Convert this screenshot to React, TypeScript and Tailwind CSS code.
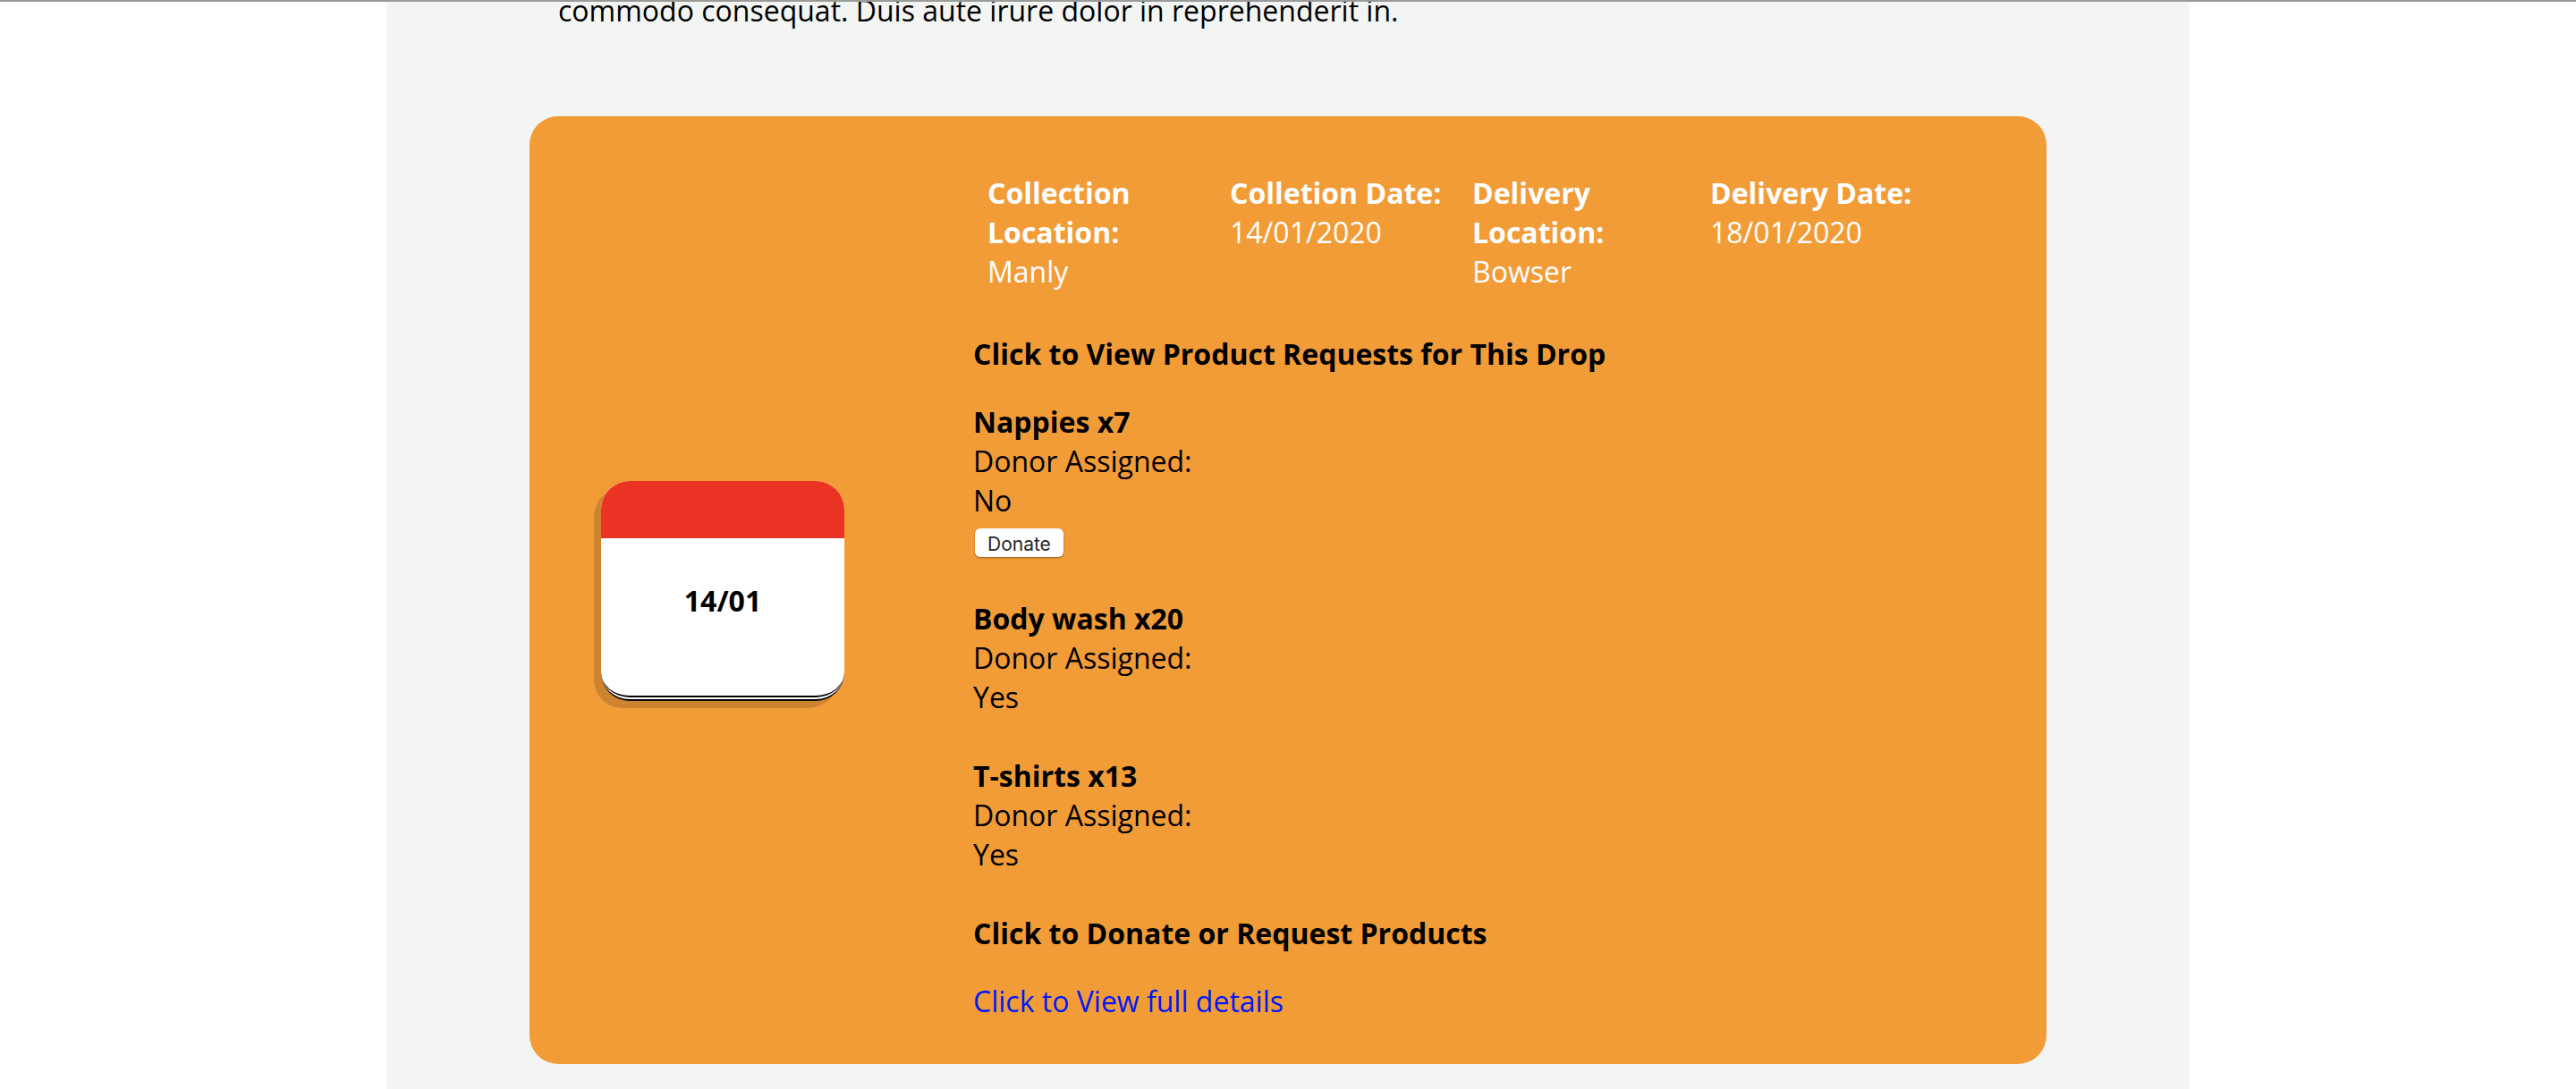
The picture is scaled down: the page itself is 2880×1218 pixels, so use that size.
import { useState } from "react";

type Request = { name: string; quantity: number; donorAssigned: boolean };

const details = [
  { label: "Collection Location:", value: "Manly" },
  { label: "Colletion Date:", value: "14/01/2020" },
  { label: "Delivery Location:", value: "Bowser" },
  { label: "Delivery Date:", value: "18/01/2020" },
];

const requests: Request[] = [
  { name: "Nappies", quantity: 7, donorAssigned: false },
  { name: "Body wash", quantity: 20, donorAssigned: true },
  { name: "T-shirts", quantity: 13, donorAssigned: true },
];

function CalendarTile({ date }: { date: string }) {
  return (
    <div className="w-[272px] rounded-[32px] border-b-[6px] border-double border-black bg-white shadow-[-8px_8px_0_rgba(0,0,0,0.15)]">
      <div className="h-16 rounded-t-[32px] bg-[#eb3323]" />
      <p className="pt-12 pb-[84px] text-center font-bold">{date}</p>
    </div>
  );
}

function DropDetails() {
  return (
    <dl className="mr-[110px] ml-4 grid grid-cols-[271fr_271fr_266fr_266fr] text-white">
      {details.map((item) => (
        <div key={item.label} className="pr-8">
          <dt className="font-bold">{item.label}</dt>
          <dd>{item.value}</dd>
        </div>
      ))}
    </dl>
  );
}

function RequestItem({ request }: { request: Request }) {
  return (
    <li>
      <h3 className="font-bold">
        {request.name} x{request.quantity}
      </h3>
      <p>Donor Assigned:</p>
      <p>{request.donorAssigned ? "Yes" : "No"}</p>
      {!request.donorAssigned && (
        <div className="flex h-11 items-start pt-[9px] pl-0.5">
          <button
            type="button"
            className="h-8 rounded-md bg-white px-3.5 pt-0.5 font-[Inter,sans-serif] text-[21px] leading-8 text-[#262626] shadow-[0_1px_2px_rgba(0,0,0,0.4)]"
          >
            Donate
          </button>
        </div>
      )}
    </li>
  );
}

export default function App() {
  const [open, setOpen] = useState(true);

  return (
    <div className="min-h-screen overflow-hidden bg-white font-['Open_Sans',sans-serif] text-[32px] leading-[44px] text-black">
      <header className="relative z-10 h-0.5 bg-[#9b9c99]" />
      <main className="mx-auto min-h-screen w-[70%] bg-[#f2f5f2] px-40">
        <div className="flow-root">
          <p className="-mt-3 px-8">commodo consequat. Duis aute irure dolor in reprehenderit in.</p>
        </div>
        <article className="mt-24 flex items-center rounded-[32px] bg-[#f29c38]">
          <div className="w-[496px] shrink-0 pt-0.5 pl-20">
            <CalendarTile date="14/01" />
          </div>
          <div className="grow pt-16 pb-12">
            <DropDetails />
            <h2 className="mt-12">
              <button
                type="button"
                aria-expanded={open}
                onClick={() => setOpen(!open)}
                className="block cursor-pointer text-left font-bold"
              >
                Click to View Product Requests for This Drop
              </button>
            </h2>
            {open && (
              <ul className="mt-8 flex flex-col gap-11">
                {requests.map((request) => (
                  <RequestItem key={request.name} request={request} />
                ))}
              </ul>
            )}
            <h2 className="mt-11">
              <button type="button" className="block cursor-pointer text-left font-bold">
                Click to Donate or Request Products
              </button>
            </h2>
            <a href="#details" className="mt-8 block w-fit text-[#0018f5]">
              Click to View full details
            </a>
          </div>
        </article>
      </main>
    </div>
  );
}
